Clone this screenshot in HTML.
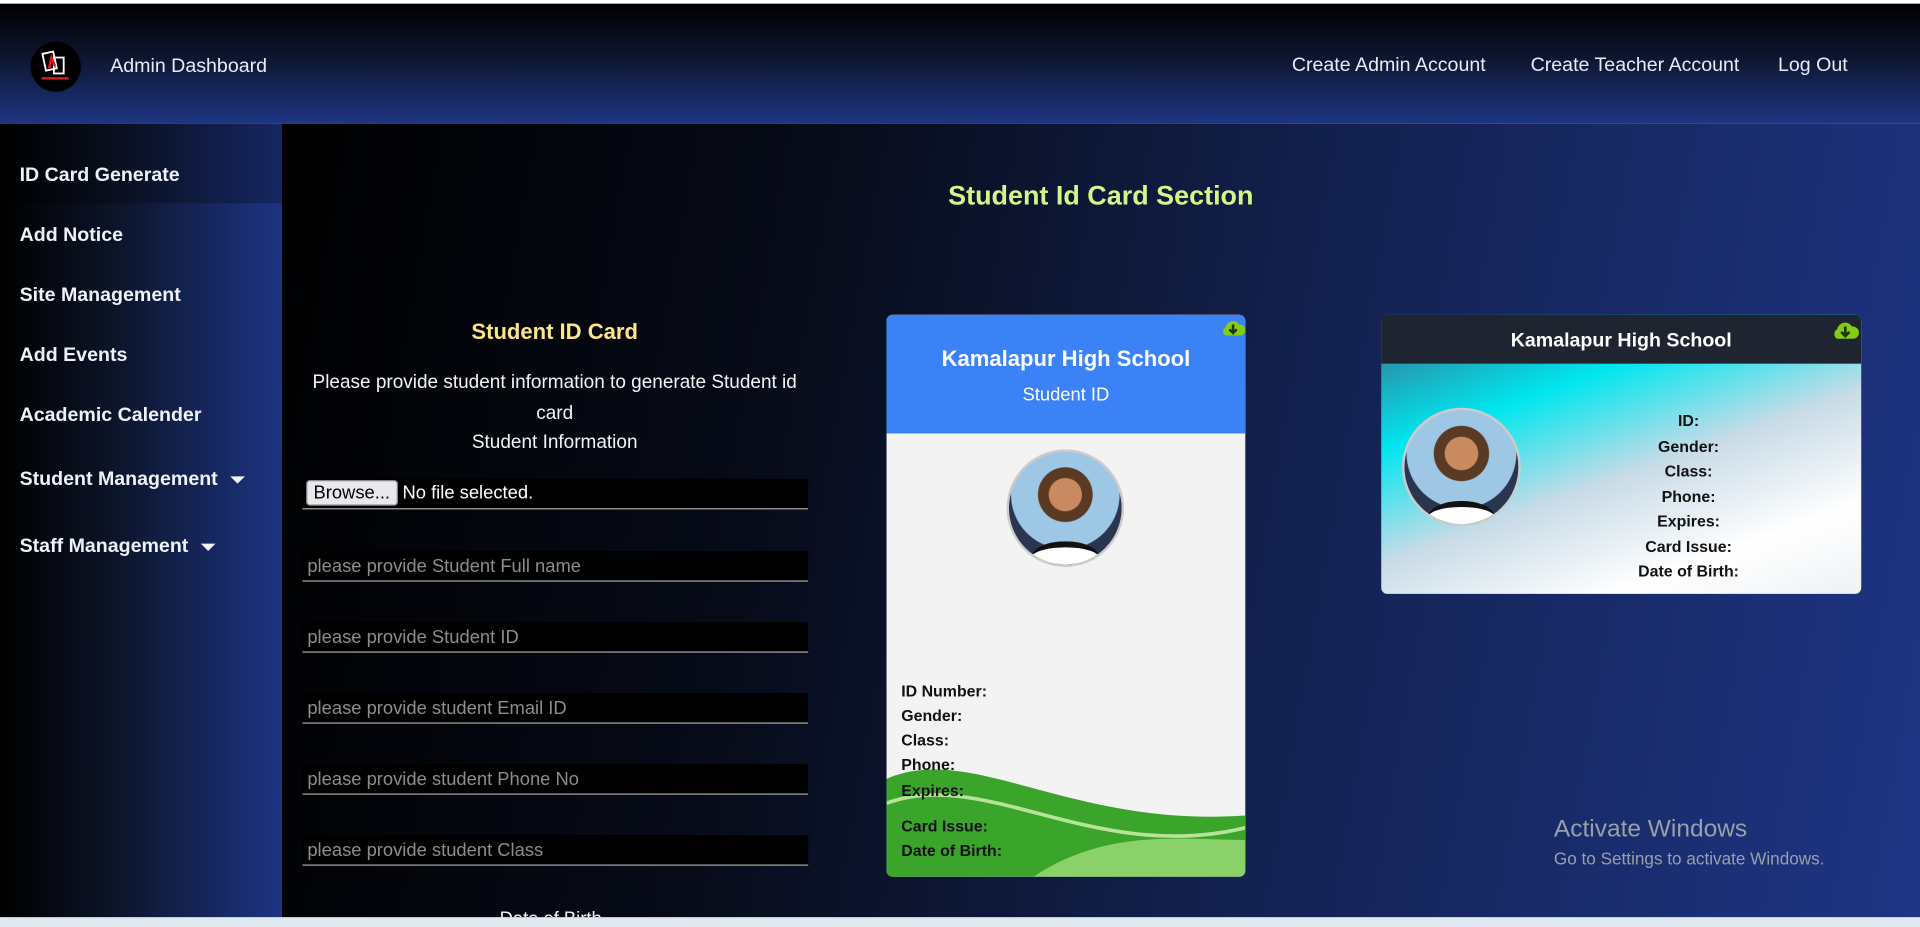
<!DOCTYPE html>
<html><head><meta charset="utf-8"><style>
*{margin:0;padding:0;box-sizing:border-box}
html,body{width:1920px;height:927px;overflow:hidden;background:#fff;font-family:"Liberation Sans",sans-serif}
#w{width:1568px;height:757px;transform:scale(1.22449);transform-origin:0 0;position:relative;background:#fff}
.hdr{position:absolute;left:0;top:3px;width:1568px;height:98px;background:linear-gradient(180deg,#000 0%,#0d1630 45%,#1e3582 100%)}
.logo{position:absolute;left:25px;top:31px;width:41px;height:41px;border-radius:50%;background:#000}
.hdr .t{position:absolute;left:90px;top:43px;color:#e8ecf5;font-size:16px}
.nav{position:absolute;top:42px;color:#e8ecf5;font-size:16px}
.side{position:absolute;left:0;top:101px;width:230px;height:649px;background:linear-gradient(90deg,#000 0%,#0c1428 40%,#1d3484 100%)}
.side div{position:absolute;left:16px;color:#f0f2f8;font-weight:bold;font-size:16px}
.tri{display:inline-block;width:0;height:0;border-left:6px solid transparent;border-right:6px solid transparent;border-top:6px solid #f0f2f8;margin-left:10px;vertical-align:middle}
.main{position:absolute;left:230px;top:101px;width:1338px;height:649px;background:linear-gradient(100deg,#000 0%,#070b18 30%,#13214f 60%,#1e3585 100%)}
.bot{position:absolute;left:0;top:749px;width:1568px;height:8px;background:#dfe9f0}
.in{position:absolute;left:247px;width:413px;height:25px;background:#000;border-bottom:1px solid #aaa;color:#8d8d8d;font-size:15px;padding:4px 4px}
.c1{position:absolute;left:724px;top:257px;width:293px;height:459px;border-radius:5px;overflow:hidden;background:#f3f3f3}
.c1 .top{height:97px;background:#3b82f6;text-align:center;color:#fff}
.c1 .f{position:absolute;left:12px;font-weight:bold;font-size:13px;color:#111}
.av{position:absolute;border-radius:50%;border:2px solid #ccc;background:radial-gradient(circle at 50% 38%,#c98a62 0 18%,#5a3a22 19% 30%,#9ec7e6 31% 60%,#2a3550 61% 100%);overflow:hidden}
.av:after{content:"";position:absolute;left:20%;bottom:-10%;width:60%;height:25%;background:#fff;border-top:5px solid #111;border-radius:50% 50% 0 0}
.c2{position:absolute;left:1128px;top:257px;width:392px;height:228px;border-radius:5px;overflow:hidden;background:linear-gradient(160deg,#3a6a8a 0%,#00e6ee 30%,#c8dbe7 55%,#fff 80%,#eef2f5 100%)}
.c2 .top{height:40px;background:#1f2530;color:#fff;text-align:center;font-size:16px;font-weight:bold;padding-top:13px}
.c2 .f{font-weight:bold;font-size:13px;color:#111;text-align:center;position:absolute;left:251px;width:0;display:flex;justify-content:center;white-space:nowrap}
.cl{position:absolute}
</style></head><body><div id="w">
<div class="hdr">
<div class="logo"><svg width="41" height="41" viewBox="0 0 41 41"><rect x="11" y="9" width="9" height="14" fill="none" stroke="#fff" stroke-width="1.5" transform="rotate(-12 15 16)"/><rect x="19" y="13" width="8" height="13" fill="none" stroke="#fff" stroke-width="1.5"/><path d="M15 22 L17 13 L20 20" stroke="#e11" stroke-width="2" fill="none"/><rect x="9" y="29" width="22" height="2" fill="#c22"/></svg></div>
<div class="t">Admin Dashboard</div>
<div class="nav" style="left:1055px">Create Admin Account</div>
<div class="nav" style="left:1250px">Create Teacher Account</div>
<div class="nav" style="left:1452px">Log Out</div>
</div>
<div class="side">
<div style="left:0;top:0;width:230px;height:65px;background:rgba(0,0,0,0.25)"></div>
<div style="top:34px">ID Card Generate</div>
<div style="top:83px">Add Notice</div>
<div style="top:132px">Site Management</div>
<div style="top:181px">Add Events</div>
<div style="top:230px">Academic Calender</div>
<div style="top:282px">Student Management<span class="tri"></span></div>
<div style="top:337px">Staff Management<span class="tri"></span></div>
</div>
<div class="main"></div>
<div style="position:absolute;left:230px;top:147px;width:1338px;text-align:center;color:#d4f58a;font-size:22px;font-weight:bold">Student Id Card Section</div>
<div style="position:absolute;left:240px;top:261px;width:426px;text-align:center;color:#fde68a;font-size:18px;font-weight:bold">Student ID Card</div>
<div style="position:absolute;left:240px;top:301px;width:426px;text-align:center;color:#f3f4f6;font-size:15.5px;line-height:24.5px">Please provide student information to generate Student id card<br>Student Information</div>
<div class="in" style="top:391px;color:#fff;padding:1px 3px"><span style="display:inline-block;background:#e9e9ed;color:#000;border:1px solid #888;border-radius:3px;padding:1px 5px;font-size:15px">Browse...</span> No file selected.</div>
<div class="in" style="top:450px">please provide Student Full name</div>
<div class="in" style="top:508px">please provide Student ID</div>
<div class="in" style="top:566px">please provide student Email ID</div>
<div class="in" style="top:624px">please provide student Phone No</div>
<div class="in" style="top:682px">please provide student Class</div>
<div style="position:absolute;left:408px;top:742px;color:#f3f4f6;font-size:15px;height:7px;overflow:hidden">Date of Birth</div>
<div class="c1">
<div class="top"><div style="padding-top:26px;font-size:18px;font-weight:bold">Kamalapur High School</div><div style="padding-top:10px;font-size:15px">Student ID</div></div>
<div class="av" style="left:98px;top:110px;width:96px;height:96px"></div>
<svg style="position:absolute;left:0;bottom:0" width="293" height="100" viewBox="0 0 293 100"><path d="M0 20 C70 -10 150 60 293 50 L293 100 L0 100Z" fill="#3aa52a"/><path d="M0 40 C80 10 170 90 293 60" stroke="#b5e39a" stroke-width="3" fill="none"/><path d="M120 100 C180 60 240 70 293 70 L293 100Z" fill="#8bd16a"/></svg>
<div class="f" style="top:300px">ID Number:</div><div class="f" style="top:320px">Gender:</div><div class="f" style="top:340px">Class:</div><div class="f" style="top:360px">Phone:</div><div class="f" style="top:381px">Expires:</div><div class="f" style="top:410px">Card Issue:</div><div class="f" style="top:430px">Date of Birth:</div>
<svg class="cl" style="left:273px;top:2px" width="20" height="18" viewBox="0 0 20 18"><path d="M4 15 A4 4 0 0 1 4 8 A6 6 0 0 1 15 6 A4.5 4.5 0 0 1 16 15Z" fill="#84cc16"/><path d="M10 6 V12 M7 10 L10 13 L13 10" stroke="#1a3a0a" stroke-width="2" fill="none"/></svg>
</div>
<div class="c2">
<div class="top">Kamalapur High School</div>
<div class="av" style="left:17px;top:76px;width:97px;height:97px"></div>
<div class="f" style="top:79px">ID:</div><div class="f" style="top:100px">Gender:</div><div class="f" style="top:120px">Class:</div><div class="f" style="top:141px">Phone:</div><div class="f" style="top:161px">Expires:</div><div class="f" style="top:182px">Card Issue:</div><div class="f" style="top:202px">Date of Birth:</div>
<svg class="cl" style="left:367px;top:3px" width="24" height="20" viewBox="0 0 20 18"><path d="M4 15 A4 4 0 0 1 4 8 A6 6 0 0 1 15 6 A4.5 4.5 0 0 1 16 15Z" fill="#84cc16"/><path d="M10 6 V12 M7 10 L10 13 L13 10" stroke="#1a3a0a" stroke-width="2" fill="none"/></svg>
</div>
<div style="position:absolute;left:1269px;top:666px;color:#9aa0aa;font-size:20px">Activate Windows</div>
<div style="position:absolute;left:1269px;top:693px;color:#9aa0aa;font-size:14px">Go to Settings to activate Windows.</div>
<div class="bot"></div>
</div></body></html>
